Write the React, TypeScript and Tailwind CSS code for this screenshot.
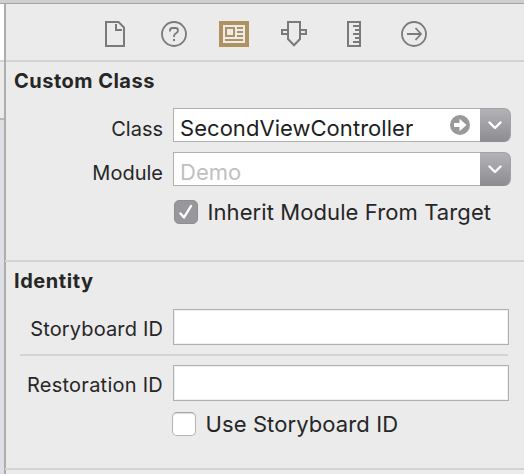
import type { ReactNode } from 'react';

function FileIcon() {
  return (
    <svg className="h-[26px] w-5" viewBox="0 0 20 26" fill="none" stroke="#7a7a7a" strokeWidth="2">
      <path d="M1 1H13.5L19 6.5V25H1Z" />
      <path d="M11 3V9H17" />
    </svg>
  );
}

function HelpIcon() {
  return (
    <svg className="size-[26px]" viewBox="0 0 26 26" fill="none" stroke="#7a7a7a" strokeWidth="1.8">
      <circle cx="13" cy="13" r="12" />
      <path d="M9 10.5V9.5C9 8 10 7 11.5 7H14.5C16 7 17 8 17 9.5C17 12.5 13 12 13 15V16" />
      <path d="M12 19H14" />
    </svg>
  );
}

function IdentityIcon() {
  return (
    <svg className="h-[26px] w-[30px]" viewBox="0 0 30 26" fill="none">
      <path d="M0 0H30V26H0Z" fill="#b09160" />
      <path d="M4 4H26V22H4Z" fill="#ebebeb" />
      <path d="M7 7H15V15H7ZM18 7H24M18 11H24M18 15H24M6 19H24" stroke="#b09160" strokeWidth="2" />
    </svg>
  );
}

function AttributesIcon() {
  return (
    <svg className="size-[26px]" viewBox="0 0 26 26" fill="none" stroke="#7a7a7a" strokeWidth="2">
      <path d="M7 1H19V18L13 24.3L7 18Z" />
      <path d="M7 9H1V13H7M19 9H25V13H19" />
    </svg>
  );
}

function SizeIcon() {
  return (
    <svg className="h-[26px] w-[14px]" viewBox="0 0 14 26" fill="none" stroke="#7a7a7a" strokeWidth="2">
      <path d="M1 1H13V25H1ZM6 5H13M8 9H13M6 13H13M8 17H13M6 21H13" />
    </svg>
  );
}

function ConnectionsIcon() {
  return (
    <svg className="size-[26px]" viewBox="0 0 26 26" fill="none" stroke="#7a7a7a" strokeWidth="1.8">
      <circle cx="13" cy="13" r="12" />
      <path d="M6 13H19.5M14.5 7L20 13L14.5 19" />
    </svg>
  );
}

function DropButton() {
  return (
    <div className="flex h-[34px] w-[31px] justify-center rounded-r-[7px] border-y border-r border-[#a3a2a6] border-b-[#8d8c91] bg-linear-to-b from-[#b3b2b7] to-[#8e8d92] pt-[12px]">
      <svg className="h-[9px] w-[14px]" viewBox="0 0 14 9" fill="none" stroke="#fff" strokeWidth="2.4" strokeLinecap="round" strokeLinejoin="round">
        <path d="M1.5 1.5L7 7L12.5 1.5" />
      </svg>
    </div>
  );
}

function Label({ children }: { children: ReactNode }) {
  return <div className="w-[173px] shrink-0 pr-[10px] pt-[4px] text-right text-[20px] leading-[34px]">{children}</div>;
}

function IdLabel({ children }: { children: ReactNode }) {
  return <div className="w-[173px] shrink-0 pr-[10px] pt-[3px] text-right text-[20px] leading-[34px]">{children}</div>;
}

function EmptyField() {
  return <div className="h-9 w-[336px] border border-[#b0b0b0] bg-white shadow-[inset_0_0_0_1px_#f0f0f0]" />;
}

export default function App() {
  return (
    <div className="flex h-[474px] w-[524px] flex-col overflow-hidden whitespace-nowrap bg-[#ebebeb] font-[Inter,sans-serif] text-[#262626]">
      <div className="h-1 shrink-0 border-b border-[#a5a5a5] bg-[#cecece]" />
      <div className="flex flex-1">
        <div className="flex w-1 shrink-0 flex-col">
          <div className="h-14 bg-white" />
          <div className="h-0.5 bg-[#d3d3d3]" />
          <div className="h-14 bg-[#ebebeb]" />
          <div className="h-0.5 bg-[#b8b8b8]" />
          <div className="flex-1 bg-[#dfe0e5]" />
        </div>
        <div className="w-0.5 shrink-0 bg-[#adadad]" />
        <main className="-ml-1.5 flex w-[524px] flex-col">
          <header className="ml-1.5 flex h-[58px] shrink-0 border-b-2 border-[#d3d3d3] pt-[17px] pl-[99px]">
            <FileIcon />
            <div className="ml-9"><HelpIcon /></div>
            <div className="ml-8"><IdentityIcon /></div>
            <div className="ml-8"><AttributesIcon /></div>
            <div className="ml-10"><SizeIcon /></div>
            <div className="ml-10"><ConnectionsIcon /></div>
          </header>
          <section className="h-[198px] shrink-0">
            <h2 className="h-[46px] pt-[4px] pl-[14px] text-[20px] leading-[30px] font-bold"><span className="tracking-[0.48px]">Custom Class</span></h2>
            <div className="flex h-11">
              <Label><span className="tracking-[0px]">Class</span></Label>
              <div className="flex h-[34px] w-[307px] border border-r-0 border-[#b0b0b0] bg-white pl-[6px]">
                <span className="w-[270px] pt-[2px] text-[22px] leading-[34px] tracking-[0.04px] text-[#1e1e1e]">SecondViewController</span>
                <svg className="mt-[6px] size-5" viewBox="0 0 20 20">
                  <circle cx="10" cy="10" r="10" fill="#999" />
                  <path d="M4 8H9.5V3.8L16.5 10L9.5 16.2V12H4Z" fill="#fff" />
                </svg>
              </div>
              <DropButton />
            </div>
            <div className="flex h-12">
              <Label><span className="tracking-[0px]">Module</span></Label>
              <div className="h-[34px] w-[307px] border border-r-0 border-[#b0b0b0] bg-white pt-[2px] pl-[6px] text-[22px] leading-[34px] tracking-[0px] text-[#bfbfbf]">Demo</div>
              <DropButton />
            </div>
            <div className="flex h-6 pl-[174px]">
              <div className="flex size-6 items-center justify-center rounded-[5px] border border-[#8e8d92] bg-[#98979c]">
                <svg className="size-4" viewBox="0 0 16 16" fill="none" stroke="#fff" strokeWidth="2.4" strokeLinecap="round" strokeLinejoin="round">
                  <path d="M2.5 9.5L6 13.5L13 2" />
                </svg>
              </div>
              <span className="ml-[9.5px] text-[22px] leading-[24px] tracking-[0.09px]">Inherit Module From Target</span>
            </div>
          </section>
          <section className="ml-[5px] h-[210px] shrink-0 border-y-2 border-[#d3d3d3]">
            <div className="-ml-[5px]">
              <h2 className="h-[47px] pt-[4px] pl-[14px] text-[20px] leading-[30px] font-bold"><span className="tracking-[0.55px]">Identity</span></h2>
              <div className="flex h-[45px]">
                <IdLabel><span className="tracking-[0.15px]">Storyboard ID</span></IdLabel>
                <EmptyField />
              </div>
              <div className="ml-5 h-0.5 w-[488px] bg-[#d3d3d3]" />
              <div className="mt-[9px] flex h-[47px]">
                <IdLabel><span className="tracking-[0.25px]">Restoration ID</span></IdLabel>
                <EmptyField />
              </div>
              <div className="flex h-6 pl-[172px]">
                <div className="size-6 rounded-[5px] border border-[#b5b5b5] border-t-[#a4a4a4] bg-white shadow-[inset_0_1px_1px_#ddd]" />
                <span className="ml-[9.5px] text-[22px] leading-[24px] tracking-[0.1px]">Use Storyboard ID</span>
              </div>
            </div>
          </section>
        </main>
      </div>
    </div>
  );
}
